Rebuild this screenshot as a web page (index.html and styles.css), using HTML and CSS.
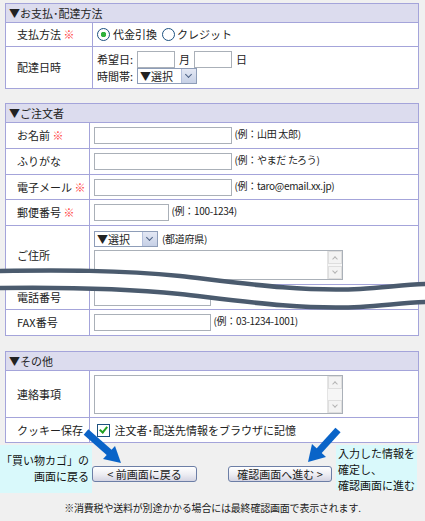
FILE: index.html
```html
<!DOCTYPE html>
<html>
<head>
    <meta charset="utf-8">
    <title>ご注文手続き</title>
    <link rel="stylesheet" href="styles.css">
</head>
<body>
<div class="page">
    <!-- お支払・配達方法 -->
    <table class="sect sect-pay">
        <colgroup><col class="c-label"><col></colgroup>
        <tr class="head"><th colspan="2">▼お支払･配達方法</th></tr>
        <tr class="r24">
            <td class="label">支払方法 <span class="req">※</span></td>
            <td class="field"><span class="radio on"></span>代金引換<span class="radio gap"></span>クレジット</td>
        </tr>
        <tr class="r43">
            <td class="label">配達日時</td>
            <td class="field">
                <div class="line">希望日: <input type="text" class="in-date"> 月 <input type="text" class="in-date"> 日</div>
                <div class="line">時間帯: <span class="select sel-time"><span class="sel-text">▼選択</span><span class="sel-btn"></span></span></div>
            </td>
        </tr>
    </table>

    <!-- ご注文者 -->
    <table class="sect sect-user">
        <colgroup><col class="c-label"><col></colgroup>
        <tr class="head"><th colspan="2">▼ご注文者</th></tr>
        <tr class="r26">
            <td class="label">お名前 <span class="req">※</span></td>
            <td class="field"><input type="text" class="in-long"> <span class="eg">(例：山田 太郎)</span></td>
        </tr>
        <tr class="r26">
            <td class="label">ふりがな</td>
            <td class="field"><input type="text" class="in-long"> <span class="eg">(例：やまだ たろう)</span></td>
        </tr>
        <tr class="r25">
            <td class="label">電子メール <span class="req">※</span></td>
            <td class="field"><input type="text" class="in-long"> <span class="eg">(例：taro@email.xx.jp)</span></td>
        </tr>
        <tr class="r26">
            <td class="label">郵便番号 <span class="req">※</span></td>
            <td class="field"><input type="text" class="in-zip"> <span class="eg">(例：100-1234)</span></td>
        </tr>
        <tr class="r59">
            <td class="label">ご住所</td>
            <td class="field">
                <div class="line"><span class="select sel-pref"><span class="sel-text">▼選択</span><span class="sel-btn"></span></span> <span class="eg">(都道府県)</span></div>
                <div class="textarea ta-addr"><span class="sbar"><span class="sb-up"></span><span class="sb-down"></span></span></div>
            </td>
        </tr>
        <tr class="r25">
            <td class="label">電話番号</td>
            <td class="field"><input type="text" class="in-tel"></td>
        </tr>
        <tr class="r26">
            <td class="label">FAX番号</td>
            <td class="field"><input type="text" class="in-tel"> <span class="eg">(例：03-1234-1001)</span></td>
        </tr>
    </table>

    <!-- その他 -->
    <table class="sect sect-etc">
        <colgroup><col class="c-label"><col></colgroup>
        <tr class="head"><th colspan="2">▼その他</th></tr>
        <tr class="r47">
            <td class="label">連絡事項</td>
            <td class="field"><div class="textarea ta-note"><span class="sbar"><span class="sb-up"></span><span class="sb-down"></span></span></div></td>
        </tr>
        <tr class="r25">
            <td class="label">クッキー保存</td>
            <td class="field"><span class="check"></span> 注文者･配送先情報をブラウザに記憶</td>
        </tr>
    </table>

    <div class="actions">
        <div class="note note-back">「買い物カゴ」の<br>画面に戻る</div>
        <button class="btn btn-back">&lt; 前画面に戻る</button>
        <button class="btn btn-next">確認画面へ進む &gt;</button>
        <div class="note note-next">入力した情報を<br>確定し、<br>確認画面に進む</div>
    </div>

    <p class="footer">※消費税や送料が別途かかる場合には最終確認画面で表示されます.</p>

    <!-- 省略を示す波線 -->
    <svg class="wave" width="425" height="521" viewBox="0 0 425 521">
        <path d="M-5,279 C60,278 120,279 180,285 C240,292 300,301 360,298 C390,296 410,293 430,293" fill="none" stroke="#fff" stroke-width="16"/>
        <path d="M-5,271 C60,270 120,270 180,276 C240,283 300,292 360,289 C390,287 410,284 430,284" fill="none" stroke="#4b5b6e" stroke-width="4.5"/>
        <path d="M-5,288 C60,287 120,288 180,294 C240,301 300,310 360,307 C390,305 410,302 430,302" fill="none" stroke="#4b5b6e" stroke-width="4.5"/>
    </svg>

    <!-- 案内の矢印 -->
    <svg class="arrows" width="425" height="521" viewBox="0 0 425 521">
        <line x1="86" y1="432" x2="111" y2="454" stroke="#0a64c8" stroke-width="7"/>
        <polygon points="121,463 103,459 115,446" fill="#0a64c8"/>
        <line x1="338" y1="430" x2="318" y2="452" stroke="#0a64c8" stroke-width="7"/>
        <polygon points="308,462 326,457 312,444" fill="#0a64c8"/>
    </svg>
</div>
</body>
</html>
```

FILE: styles.css
```css
body {
    margin: 0;
    background-color: #f0f0f0;
    font-family: "Noto Sans CJK JP", sans-serif;
    font-size: 11px;
    color: #222;
}

.page {
    position: relative;
    width: 425px;
    height: 521px;
    padding-top: 3px;
    box-sizing: border-box;
    overflow: hidden;
}

/* form sections */
.sect {
    margin-left: 5px;
    width: 414px;
    border-collapse: collapse;
    background-color: #fff;
    table-layout: fixed;
}
.sect th,
.sect td {
    border: 1px solid #a4a4da;
    padding: 0;
    line-height: 13px;
    white-space: nowrap;
    overflow: hidden;
}
.sect th {
    background-color: #dcdcee;
    text-align: left;
    font-weight: normal;
    padding-left: 3px;
}
.sect-pay .c-label { width: 87px; }
.sect-user .c-label,
.sect-etc .c-label { width: 84px; }
.sect-user { margin-top: 14px; }
.sect-etc { margin-top: 15px; }

.head { height: 19px; }
.r24 { height: 24px; }
.r25 { height: 25px; }
.r26 { height: 26px; }
.r43 { height: 42px; }
.r47 { height: 47px; }
.r59 { height: 59px; }

.label { padding-left: 11px !important; }
.field { padding-left: 4px !important; }

.req { color: #ff3b3b; }

.eg {
    font-size: 10px;
    letter-spacing: -0.3px;
}

.line {
    display: flex;
    align-items: center;
    gap: 4px;
}

/* inputs */
input[type="text"] {
    height: 17px;
    box-sizing: border-box;
    border: 1px solid #aab0b8;
    padding: 0;
    margin: 0;
    vertical-align: middle;
    background: #fff;
}
.in-date { width: 38px; }
.in-long { width: 138px; }
.in-zip { width: 75px; }
.in-tel { width: 117px; }

/* selects */
.select {
    display: inline-flex;
    align-items: center;
    height: 16px;
    box-sizing: border-box;
    border: 1px solid #8e9db8;
    background: #fff;
}
.sel-time { width: 60px; }
.sel-pref { width: 64px; }
.sel-text {
    flex: 1;
    padding-left: 2px;
    line-height: 14px;
}
.sel-btn {
    position: relative;
    width: 14px;
    height: 14px;
    background: linear-gradient(#e4e8f4, #c6d0e6);
    border-left: 1px solid #b4c0dc;
}
.sel-btn::after {
    content: "";
    position: absolute;
    left: 4px;
    top: 3px;
    width: 4px;
    height: 4px;
    border-right: 1.5px solid #4d6185;
    border-bottom: 1.5px solid #4d6185;
    transform: rotate(45deg);
}

/* textareas */
.textarea {
    display: flex;
    justify-content: flex-end;
    box-sizing: border-box;
    border: 1px solid #aab0b8;
    background: #fff;
}
.ta-addr {
    width: 249px;
    height: 30px;
    margin-top: 3px;
}
.ta-note {
    width: 249px;
    height: 39px;
}
.sbar {
    display: flex;
    flex-direction: column;
    justify-content: space-between;
    width: 14px;
    background: #f6f6f6;
    border-left: 1px solid #e4e4e4;
}
.sb-up,
.sb-down {
    position: relative;
    height: 13px;
    background: #f3f3f3;
    border: 1px solid #dedede;
    box-sizing: border-box;
}
.sb-up::after,
.sb-down::after {
    content: "";
    position: absolute;
    left: 4px;
    width: 3px;
    height: 3px;
    border-right: 1px solid #b4b4b4;
    border-bottom: 1px solid #b4b4b4;
}
.sb-up::after { top: 5px; transform: rotate(-135deg); }
.sb-down::after { top: 2px; transform: rotate(45deg); }

/* radio and checkbox */
.radio {
    display: inline-block;
    width: 11px;
    height: 11px;
    border: 1px solid #1c5180;
    border-radius: 50%;
    background: #fff;
    vertical-align: -2px;
    margin-right: 3px;
}
.radio.gap { margin-left: 5px; margin-right: 2px; }
.radio.on {
    background: radial-gradient(circle, #2fb13c 0 2.5px, #fff 3px);
}
.check {
    position: relative;
    display: inline-block;
    width: 11px;
    height: 11px;
    border: 1px solid #1c5180;
    background: #fff;
    vertical-align: -2px;
    margin-left: 3px;
    margin-right: 2px;
}
.check::after {
    content: "";
    position: absolute;
    left: 3px;
    top: 0;
    width: 3px;
    height: 6px;
    border-right: 2px solid #21a121;
    border-bottom: 2px solid #21a121;
    transform: rotate(40deg);
}

/* bottom buttons */
.actions {
    display: flex;
    align-items: flex-start;
    margin-top: 2px;
    height: 50px;
}
.note {
    background-color: #d9f9fb;
    font-size: 11px;
    line-height: 16px;
    color: #111;
    white-space: nowrap;
}
.note-back {
    width: 89px;
    height: 40px;
    padding: 7px 3px 1px 0;
    text-align: right;
}
.note-next {
    width: 79px;
    height: 45px;
    padding-left: 2px;
    margin-left: 4px;
}
.btn {
    margin-top: 21px;
    height: 16px;
    padding: 0;
    border: 1px solid #6c7ea6;
    border-radius: 3px;
    background: linear-gradient(#ffffff, #ececf2 55%, #d4d4e2);
    font-family: "Noto Sans CJK JP", sans-serif;
    font-size: 11px;
    line-height: 13px;
    color: #222;
    white-space: nowrap;
}
.btn-back { width: 105px; }
.btn-next {
    width: 104px;
    margin-left: 31px;
}

.footer {
    margin: 5px 0 0;
    text-align: center;
    font-size: 10px;
    letter-spacing: -0.2px;
}

/* overlays */
.wave,
.arrows {
    position: absolute;
    left: 0;
    top: 0;
    pointer-events: none;
}
```
